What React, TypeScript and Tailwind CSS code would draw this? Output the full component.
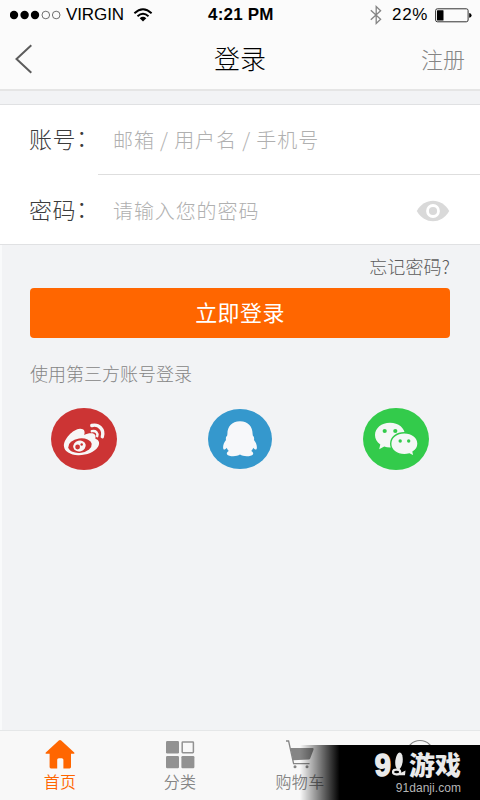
import type { ReactNode } from "react";

function StatusBar() {
  return (
    <div className="flex h-[30px] items-center pl-[10px] pr-[8px] font-['Liberation_Sans',Arial,sans-serif] text-black">
      <div className="flex w-[198px] items-center">
        <svg width="52" height="10" viewBox="0 0 52 10">
          <circle cx="4" cy="5" r="4.2" />
          <circle cx="14.6" cy="5" r="4.2" />
          <circle cx="25" cy="5" r="4.2" />
          <circle cx="35.8" cy="5" r="3.8" fill="none" stroke="#333" strokeWidth=".7" />
          <circle cx="46.2" cy="5" r="3.8" fill="none" stroke="#333" strokeWidth=".7" />
        </svg>
        <span className="ml-1 w-[59px] whitespace-nowrap text-[17px] leading-[30px] tracking-[-0.1px]">VIRGIN</span>
        <svg className="ml-2" width="20" height="14" viewBox="0 0 20 14" fill="none" stroke="#000" strokeWidth="1.9">
          <path d="M1.4 5.2Q10-2.8 18.6 5.2" />
          <path d="M4.5 8.2Q10 3.2 15.5 8.2" />
          <path d="M6.7 10.2Q10 7.4 13.3 10.2L10 13.4Z" fill="#000" stroke="none" />
        </svg>
      </div>
      <span className="w-[162px] whitespace-nowrap text-[17px] font-bold leading-[30px] tracking-[0.2px]">4:21 PM</span>
      <svg width="12" height="20" viewBox="0 0 12 20" fill="none" stroke="#858585" strokeWidth="1.3">
        <path d="M.8 5.2L10.6 14.2L6.2 18.4V1.6L10.6 5.8L.8 14.8" />
      </svg>
      <span className="ml-[10px] w-[37px] whitespace-nowrap text-[17px] leading-[30px] tracking-[0.7px]">22%</span>
      <svg className="ml-[6px]" width="37" height="15" viewBox="0 0 37 15">
        <rect x=".6" y=".8" width="32.5" height="13" rx="1.8" fill="none" stroke="#333" />
        <rect x="2" y="2.2" width="6.5" height="10.2" rx=".5" />
        <path d="M34.2 5Q36.6 5.4 36.6 7.4T34.2 9.8Z" />
      </svg>
    </div>
  );
}

function Header() {
  return (
    <header className="h-[91px] border-b-2 border-[#e5e5e5] bg-[#fbfbfb]">
      <StatusBar />
      <div className="grid h-[58px] grid-cols-3 items-center pl-[15px] pr-[15px]">
        <svg width="18" height="30" viewBox="0 0 18 30" fill="none" stroke="#5c5c5c" strokeWidth="2">
          <path d="M16.3 1.2L1.5 15L16.3 28.8" />
        </svg>
        <h1 className="h-[58px] text-center text-[26px] font-light leading-[56px] text-black">登录</h1>
        <span className="h-[58px] text-right text-[22px] font-light leading-[56px] text-[#858585]">注册</span>
      </div>
    </header>
  );
}

function Field({ label, hint, children }: { label: string; hint: string; children?: ReactNode }) {
  return (
    <div className="flex h-[70px] items-center pl-[29px] pr-[30px]">
      <span className="flex w-[84px] whitespace-nowrap pb-[3px] text-[23px] font-light tracking-[0.5px] text-[#3c3c3c]">
        {label}
        <span className="-mt-[2px] mb-[2px]">：</span>
      </span>
      <span className="flex-1 whitespace-nowrap text-[20px] font-light tracking-[0.9px] text-[#b0b0b0]">{hint}</span>
      {children}
    </div>
  );
}

function EyeIcon() {
  return (
    <svg className="mb-px" width="34" height="22" viewBox="0 0 34 22">
      <path d="M.8 11C8.5-2.7 25.5-2.7 33.2 11C25.5 24.7 8.5 24.7.8 11Z" fill="#d9d9d9" />
      <circle cx="17" cy="11" r="5.5" fill="#d9d9d9" stroke="#fff" strokeWidth="2.8" />
    </svg>
  );
}

function WeiboIcon() {
  return (
    <svg width="66" height="62" viewBox="0 0 66 62">
      <ellipse cx="33" cy="31" rx="33" ry="31" fill="#cc3434" />
      <path d="M13 38.5C12 31.5 22 21 29 20.7C33.2 20.5 34.4 23.4 33.2 27C37 25 43.2 24.4 44.4 27.4C45 29 43.8 30.4 44.8 30.9C48.6 32 48.8 35.6 47 38.8C43.5 44.4 35.4 47.4 27 47.2C19.2 46.9 13.4 43.4 13 38.5Z" fill="#f7f7f7" />
      <ellipse cx="29" cy="37.6" rx="11.8" ry="7.2" fill="#cc3434" transform="rotate(-8 29 37.6)" />
      <ellipse cx="28.5" cy="38" rx="6.3" ry="5.4" fill="#f7f7f7" transform="rotate(-15 28.5 38)" />
      <circle cx="26.6" cy="39" r="2.4" fill="#cc3434" />
      <circle cx="30.7" cy="36.5" r="1.2" fill="#cc3434" />
      <path d="M40.8 17.5C47.8 15.6 53.5 21.7 51.3 28.7" fill="none" stroke="#f7f7f7" strokeWidth="3.4" strokeLinecap="round" />
      <path d="M40.8 23.2C44.8 22.2 47.2 24.9 46.2 28.2" fill="none" stroke="#f7f7f7" strokeWidth="2.4" strokeLinecap="round" />
    </svg>
  );
}

function QqIcon() {
  return (
    <svg width="64" height="60" viewBox="0 0 64 60">
      <ellipse cx="32" cy="30" rx="32" ry="30" fill="#3598cd" />
      <path d="M32 12.3C40.5 12.3 44.6 18 44.6 24.8L44.8 26.6C46.2 28 46.3 29.5 46 31C48.3 34 49.5 37.5 48.6 40C48 41.4 46.3 40.2 45.2 38.8C44.9 40.1 44.1 41.2 43.2 42C45 43 45.6 44.2 44.9 45.4C43.5 47.5 35.4 47.9 32 45.5C28.6 47.9 20.5 47.5 19.1 45.4C18.4 44.2 19 43 20.8 42C19.9 41.2 19.1 40.1 18.8 38.8C17.7 40.2 16 41.4 15.4 40C14.5 37.5 15.7 34 18 31C17.7 29.5 17.8 28 19.2 26.6L19.4 24.8C19.4 18 23.5 12.3 32 12.3Z" fill="#f7f8fa" />
    </svg>
  );
}

function WechatIcon() {
  return (
    <svg width="66" height="62" viewBox="0 0 66 62">
      <ellipse cx="33" cy="31" rx="33" ry="31" fill="#33cb4b" />
      <path d="M27 14.8C35.6 14.8 42 20.2 42 27.1C42 34 35.6 39.4 27 39.4C24.9 39.4 22.9 39 21.2 38.4L16.2 41.3L17.3 36.4C13.8 34.2 12 30.9 12 27.1C12 20.2 18.4 14.8 27 14.8Z" fill="#f5f7f6" />
      <path d="M41.3 24.7C49.2 24.7 55 29.5 55 35.7C55 39 53.1 41.9 50.1 43.8L51 48.3L46.5 46C44.8 46.5 43.1 46.8 41.3 46.8C33.5 46.8 27.7 41.9 27.7 35.7C27.7 29.5 33.5 24.7 41.3 24.7Z" fill="#f5f7f6" stroke="#33cb4b" strokeWidth="1.4" />
      <g fill="#33cb4b">
        <circle cx="21.7" cy="23" r="2.1" />
        <circle cx="32.3" cy="23" r="2.1" />
        <circle cx="37.2" cy="33" r="1.7" />
        <circle cx="45.7" cy="33" r="1.7" />
      </g>
    </svg>
  );
}

function HomeIcon() {
  return (
    <svg width="30" height="30" viewBox="0 0 30 30" fill="#ff6600">
      <path d="M15 1Q15.6 1 16.2 1.6L29.2 13.6Q29.8 14.7 28.7 14.8H26V28Q26 29.4 24.6 29.4H18.4V20.8Q18.4 19.2 16.8 19.2H13.8Q12.2 19.2 12.2 20.8V29.4H6Q4.6 29.4 4.6 28V14.8H1.3Q.2 14.7.8 13.6L13.8 1.6Q14.4 1 15 1Z" />
    </svg>
  );
}

function GridIcon() {
  return (
    <svg width="30" height="30" viewBox="0 0 30 30" fill="#929292">
      <rect x="1" y="2" width="13" height="12.5" rx="1.2" />
      <rect x="17.2" y="2.9" width="11.2" height="10.8" rx=".6" fill="none" stroke="#929292" strokeWidth="1.5" />
      <rect x="1" y="17" width="13" height="12.3" rx="1.2" />
      <rect x="16.4" y="17" width="13" height="12.3" rx="1.2" />
    </svg>
  );
}

function CartIcon() {
  return (
    <svg width="30" height="30" viewBox="0 0 30 30" fill="#858585">
      <path d="M1 2H3.6L8.6 24.7H24.5" fill="none" stroke="#858585" strokeWidth="1.3" />
      <path d="M5.4 9H27.5Q29 9 28.6 10.4L25.2 19.4Q24.8 20.5 23.6 20.5L8 21.2Z" />
      <circle cx="10" cy="27.7" r="1.5" />
      <circle cx="22" cy="27.7" r="1.5" />
    </svg>
  );
}

function Tab({ label, color, children }: { label?: string; color: string; children: ReactNode }) {
  return (
    <div className={`flex flex-1 flex-col items-center pt-[8px] ${color}`}>
      {children}
      {label && (
        <span className="h-[24px] whitespace-nowrap text-[16px] font-[350] leading-[24px] tracking-[0.3px]">{label}</span>
      )}
    </div>
  );
}

function Watermark() {
  return (
    <div className="absolute bottom-0 right-0 flex h-[55px] w-[180px] flex-col items-end bg-linear-to-r from-transparent to-black to-[22%] pr-[19px] pt-[6px]">
      <div className="flex h-[28px] items-center text-[#eaeaea]">
        <span className="mr-px origin-center scale-y-[1.08] font-['Liberation_Sans',Arial,sans-serif] text-[29px] font-bold leading-[28px] [-webkit-text-stroke:1.4px_#eaeaea]">9</span>
        <svg width="14" height="28" viewBox="0 0 14 28">
          <ellipse cx="7" cy="10" rx="3.7" ry="8.6" fill="#eaeaea" transform="rotate(6 7 10)" />
          <ellipse cx="4.6" cy="21" rx="3.6" ry="2.3" fill="none" stroke="#eaeaea" strokeWidth="2.2" />
          <path d="M4 24.3L13.5 19.5L13 24.3Z" fill="#eaeaea" />
        </svg>
        <span className="ml-[3px] h-[28px] whitespace-nowrap text-[26px] font-black leading-[26px]">游戏</span>
      </div>
      <span className="mt-[2px] h-[16px] font-['Liberation_Sans',Arial,sans-serif] text-[12px] leading-[14px] tracking-[0.05px] text-[#b5b5b5]">91danji.com</span>
    </div>
  );
}

export default function App() {
  return (
    <div className="relative flex h-[800px] w-[480px] flex-col overflow-hidden bg-[#f2f3f5] font-['Noto_Sans_CJK_SC',sans-serif]">
      <Header />
      <section className="mt-[13px] h-[141px] border-y border-[#e0e1e3] bg-white">
        <Field label="账号" hint="邮箱 / 用户名 / 手机号" />
        <div className="-mt-px ml-[98px] h-px bg-[#dedede]" />
        <div className="pt-px">
          <Field label="密码" hint="请输入您的密码">
            <EyeIcon />
          </Field>
        </div>
      </section>
      <main className="flex flex-1 flex-col border-l-2 border-[#f9fafb] pl-[28px] pr-[30px]">
        <a className="mt-[8px] self-end whitespace-nowrap text-[18px] font-light leading-[26px] tracking-[0.15px] text-[#5c5c5c]">忘记密码?</a>
        <button className="mt-[9px] h-[50px] rounded-[4px] bg-[#ff6600] pb-[4px] text-[22px] leading-[45px] tracking-[0.4px] text-white">立即登录</button>
        <p className="mt-[22px] text-[18px] font-light leading-[26px] text-[#858585]">使用第三方账号登录</p>
        <div className="mt-[22px] flex items-center justify-between pl-[21px] pr-[21px]">
          <WeiboIcon />
          <QqIcon />
          <WechatIcon />
        </div>
      </main>
      <nav className="flex h-[70px] border-t border-[#e5e7e8] bg-[#f8f8f8]">
        <Tab label="首页" color="text-[#ff6600]"><HomeIcon /></Tab>
        <Tab label="分类" color="text-[#858585]"><GridIcon /></Tab>
        <Tab label="购物车" color="text-[#858585]"><CartIcon /></Tab>
        <Tab color="text-[#858585]">
          <svg width="30" height="30" viewBox="0 0 30 30">
            <circle cx="15" cy="15" r="13.5" fill="none" stroke="#858585" strokeWidth="1.2" />
          </svg>
        </Tab>
      </nav>
      <Watermark />
    </div>
  );
}
